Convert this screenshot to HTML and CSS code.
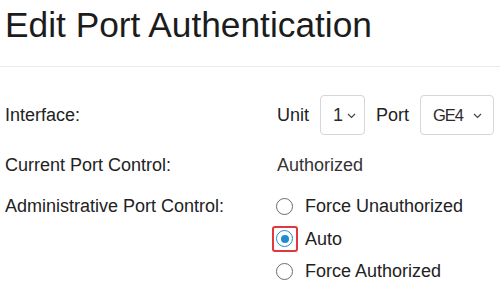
FILE: index.html
```html
<!DOCTYPE html>
<html lang="en">
<head>
    <meta charset="UTF-8">
    <title>Edit Port Authentication</title>
    <link rel="stylesheet" href="styles.css">
</head>
<body>
<div class="page">
    <h1 class="page-title">Edit Port Authentication</h1>
    <div class="form">
        <div class="form-row row-interface">
            <div class="form-label">Interface:</div>
            <div class="form-value inline">
                <span>Unit</span>
                <div class="select select-unit">
                    <span>1</span>
                    <svg class="chevron" width="9" height="6" viewBox="0 0 9 6"><path d="M1 1l3.5 3.5L8 1" fill="none" stroke="#444" stroke-width="1.2"/></svg>
                </div>
                <span>Port</span>
                <div class="select select-port">
                    <span>GE4</span>
                    <svg class="chevron" width="9" height="6" viewBox="0 0 9 6"><path d="M1 1l3.5 3.5L8 1" fill="none" stroke="#444" stroke-width="1.2"/></svg>
                </div>
            </div>
        </div>
        <div class="form-row row-current">
            <div class="form-label">Current Port Control:</div>
            <div class="form-value muted">Authorized</div>
        </div>
        <div class="form-row row-admin">
            <div class="form-label">Administrative Port Control:</div>
            <div class="form-value radios">
                <label class="radio"><span class="radio-dot"></span>Force Unauthorized</label>
                <label class="radio checked highlight"><span class="radio-dot"></span>Auto</label>
                <label class="radio"><span class="radio-dot"></span>Force Authorized</label>
            </div>
        </div>
    </div>
</div>
</body>
</html>
```

FILE: styles.css
```css
body {
    margin: 0;
    background: #ffffff;
    font-family: "Liberation Sans", Arial, sans-serif;
    color: #222;
    overflow: hidden;
}

.page-title {
    margin: 0;
    padding: 5px 0 0 5px;
    font-size: 35.3px;
    font-weight: normal;
    line-height: 40px;
    color: #1c1c1c;
    box-sizing: border-box;
    height: 67px;
    border-bottom: 1px solid #e9e9e9;
}

.form {
    padding-left: 5px;
    font-size: 18px;
}

.form-row {
    display: grid;
    grid-template-columns: 272px 1fr;
    align-items: start;
}

.row-interface {
    margin-top: 28px;
    align-items: center;
    height: 40px;
}

.row-current {
    margin-top: 14px;
    line-height: 32px;
}

.row-admin {
    margin-top: 9px;
    line-height: 32px;
}

.form-label {
    white-space: nowrap;
}

.inline {
    display: flex;
    align-items: center;
    gap: 11px;
}

.muted {
    color: #333;
}

.select {
    display: flex;
    align-items: center;
    gap: 4px;
    height: 40px;
    box-sizing: border-box;
    border: 1px solid #d6d6d6;
    border-radius: 4px;
    padding-left: 12px;
    color: #2a2a2a;
}

.select-unit {
    width: 45px;
}

.select-port {
    width: 74px;
    gap: 10px;
    font-size: 16.5px;
    letter-spacing: -1px;
}

.chevron {
    margin-top: 2px;
}

.radios {
    display: flex;
    flex-direction: column;
}

.radio {
    display: flex;
    align-items: center;
    gap: 12px;
    height: 32.5px;
    position: relative;
    margin-left: -1px;
}

.radio-dot {
    width: 17px;
    height: 17px;
    box-sizing: border-box;
    border: 1.5px solid #6b6b6b;
    border-radius: 50%;
    display: flex;
    align-items: center;
    justify-content: center;
}

.radio.checked .radio-dot {
    border-color: #1f8bd3;
}

.radio.checked .radio-dot::before {
    content: "";
    width: 8px;
    height: 8px;
    border-radius: 50%;
    background: #1f8bd3;
}

.radio.highlight::after {
    content: "";
    position: absolute;
    left: -4px;
    top: 50%;
    width: 26px;
    height: 26px;
    margin-top: -13px;
    box-sizing: border-box;
    border: 2px solid #e0383e;
    border-radius: 3px;
}
```
